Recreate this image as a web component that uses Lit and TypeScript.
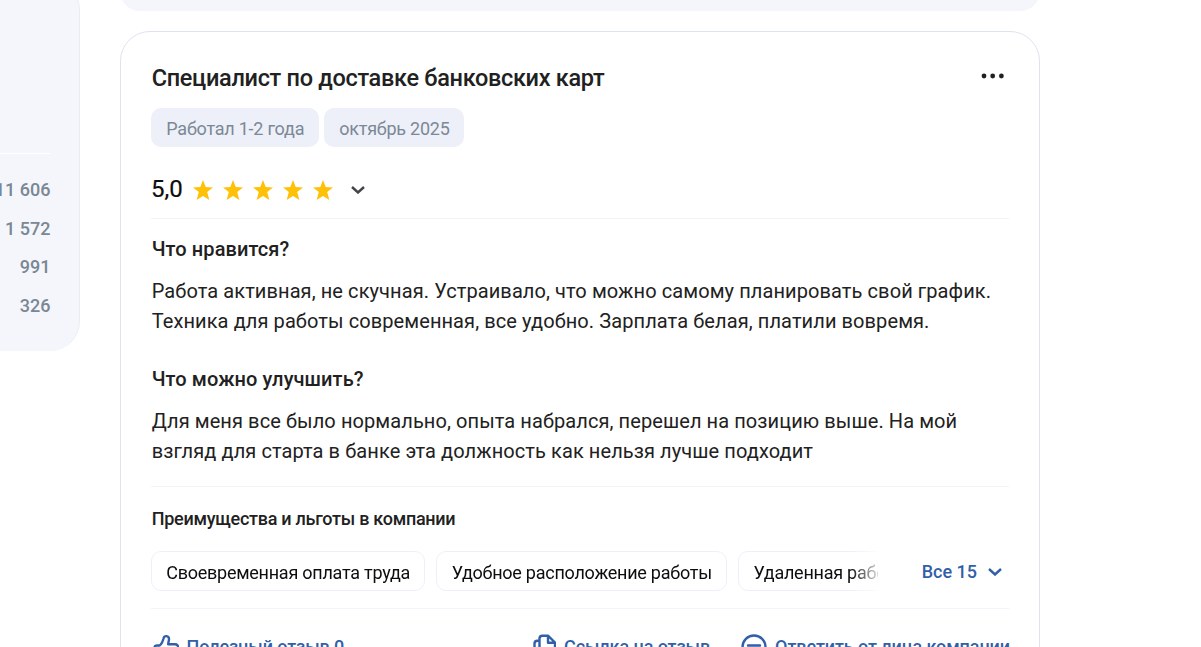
import { html, css, svg, LitElement } from "lit";
import { customElement, property } from "lit/decorators.js";

@customElement("review-rating")
export class ReviewRating extends LitElement {
  @property({ type: Number }) value = 5;

  static styles = css`
  :host {
    display: flex;
    align-items: center;
    height: 40px;
    color: #0d0d0d;
    font-size: 24px;
  }
  .value {
    width: 42px;
    margin-top: -2px;
    -webkit-text-stroke: 0.2px #0d0d0d;
  }
  .stars {
    display: flex;
    gap: 10px;
  }
  .stars svg {
    width: 20px;
    height: 20px;
    fill: #ffc107;
  }
  .chevron {
    margin-left: 18px;
    width: 14px;
    height: 8px;
    fill: none;
    stroke: #424448;
    stroke-width: 2.4;
  }
`;

  render() {
    return html`
      <span class="value">${this.value.toFixed(1).replace(".", ",")}</span>
      <span class="stars">
        ${Array.from({ length: this.value }, () => html`
          <svg viewBox="0 0 20 20"><path d="M10 0l2.700 7 7.300.4-5.800 4.700 2.200 7.900L10 15.900 3.600 20l2.200-7.900L0 7.400 7.300 7z"/></svg>`)}
      </span>
      <svg class="chevron" viewBox="0 0 14 8"><path d="M1 1l6 5.500L13 1"/></svg>
    `;
  }
}

@customElement("app-root")
export class AppRoot extends LitElement {
  @property({ attribute: false }) counts = ["11 606", "1 572", "991", "326"];
  @property({ attribute: false }) tags = ["Работал 1-2 года", "октябрь 2025"];
  @property({ attribute: false }) benefits = [
    "Своевременная оплата труда",
    "Удобное расположение работы",
    "Удаленная работа",
  ];

  static styles = css`
  :host {
    display: flex;
    align-items: flex-start;
    gap: 40px;
    height: 647px;
    overflow: hidden;
    background: #fff;
    color: #212121;
    font-family: Roboto, "Liberation Sans", sans-serif;
    font-size: 20px;
    line-height: 30px;
  }
  * {
    box-sizing: border-box;
  }

  aside {
    flex: none;
    width: 80px;
    height: 371px;
    margin-top: -20px;
    padding: 173px 29px 0 0;
    background: #f4f6fb;
    border-right: 1px solid #eaecf3;
    border-radius: 0 30px 30px 0;
  }
  .counts {
    display: flex;
    flex-direction: column;
    align-items: flex-end;
    border-top: 1px solid #fff;
    padding-top: 17px;
    color: #7a8794;
    font-size: 18px;
    font-weight: 500;
    line-height: 38.700px;
    white-space: nowrap;
  }
  .counts span {
    margin-right: -0.500px;
  }

  main {
    flex: none;
    width: 920px;
  }
  .previous {
    height: 11px;
    margin-bottom: 20px;
    overflow: hidden;
    display: flex;
    align-items: flex-end;
  }
  .previous div {
    flex: none;
    width: 100%;
    height: 60px;
    border-radius: 20px;
    background: #f4f6fb;
  }
  .card {
    height: 700px;
    padding: 30px;
    border: 1px solid #dfe3ed;
    border-radius: 30px;
  }
  header {
    display: flex;
    justify-content: space-between;
  }
  h2, h3, h4, p {
    margin: 0;
    font-weight: 500;
  }
  h2 {
    padding: 1px 0 0 0.700px;
    font-size: 23.500px;
    letter-spacing: -0.310px;
  }
  .more {
    width: 24px;
    height: 6px;
    margin: 11px 4px 0 0;
    fill: #212121;
  }
  .tags {
    display: flex;
    gap: 5px;
    margin: 15px 0 23px;
  }
  .tag {
    height: 39px;
    padding: 0 14.700px 0 15.300px;
    border-radius: 10px;
    background: #edf0f8;
    color: #7c8896;
    font-size: 18px;
    letter-spacing: -0.230px;
    line-height: 41px;
  }
  .line {
    height: 1px;
    background: #f3f4f9;
  }
  review-rating {
    margin-bottom: 8px;
  }
  h3 {
    margin: 0 0 12px;
    padding-left: 0.700px;
    font-size: 20px;
    letter-spacing: 0.100px;
  }
  p {
    padding-left: 0.700px;
    font-weight: 400;
    letter-spacing: 0.090px;
    white-space: nowrap;
  }
  .liked {
    margin: 15px 0 28px;
  }
  .improve {
    margin-bottom: 20px;
  }
  h4 {
    margin: 17px 0;
    padding-left: 0.700px;
    font-size: 18px;
    letter-spacing: -0.270px;
  }
  .benefits {
    display: flex;
    justify-content: space-between;
    margin-bottom: 17px;
  }
  .list {
    display: flex;
    gap: 11.700px;
    width: 727px;
    overflow: hidden;
    -webkit-mask-image: linear-gradient(to right, #000 700px, transparent 732px);
    mask-image: linear-gradient(to right, #000 700px, transparent 732px);
  }
  .benefit {
    flex: none;
    height: 40px;
    padding: 0 13.700px 0 14.200px;
    border: 1px solid #edf0f8;
    border-radius: 10px;
    color: #0d0d0d;
    font-size: 18px;
    letter-spacing: -0.250px;
    line-height: 41px;
    white-space: nowrap;
  }
  .all {
    display: flex;
    align-items: center;
    gap: 11px;
    height: 42px;
    margin-bottom: -2px;
    padding-right: 7px;
    color: #315fa8;
    font-size: 18px;
    font-weight: 500;
  }
  svg {
    display: block;
    flex: none;
  }
  .all svg {
    width: 14px;
    height: 8px;
    fill: none;
    stroke: #315fa8;
    stroke-width: 2.4;
  }
  footer {
    display: flex;
    margin: 23px -1px 0 1.500px;
    color: #315fa8;
    font-size: 18px;
    font-weight: 500;
    letter-spacing: -0.080px;
    white-space: nowrap;
  }
  .action {
    display: flex;
    align-items: center;
    gap: 8px;
  }
  .action svg {
    width: 26px;
    height: 26px;
    fill: none;
    stroke: #315fa8;
    stroke-width: 2.4;
    stroke-linejoin: round;
    stroke-linecap: round;
  }
  .link {
    margin-left: auto;
    margin-right: 31px;
  }
`;

  // 26x26 outline icons of the footer
  icons = {
    like: svg`<path d="M6.500 11.500H4C2.500 11.500 1.500 12.500 1.500 14v7c0 1.500 1 2.500 2.500 2.500h2.500M6.500 11.500c2.500-1.500 3.200-4 4-7 .8-3.500 5.500-3 5.500.5 0 2-.8 3.500-.8 5.200H22c2.200 0 3.300 1.600 2.800 3.300l-2 8c-.4 1.400-1.300 2-2.800 2H6.500"/>`,
    copy: svg`<path d="M9.500 4.500c0-1.800 1-2.800 2.800-2.800h5.700l7 6.800v8.500c0 1.800-1 2.800-2.800 2.800h-9.900c-1.800 0-2.800-1-2.800-2.800zM18 2v6.800h6.500M9 6.700H7.500C5.500 6.700 4.500 7.700 4.500 9.500v12c0 1.800 1 2.800 2.800 2.800h9c1.800 0 2.700-1 2.700-2.800"/>`,
    reply: svg`<circle cx="13" cy="13" r="11.500"/><path d="M7 11.500h12M7 16h12"/>`,
  };

  render() {
    return html`
      <aside>
        <div class="counts">${this.counts.map((count) => html`<span>${count}</span>`)}</div>
      </aside>
      <main>
        <div class="previous"><div></div></div>
        <article class="card">
          <header>
            <h2>Специалист по доставке банковских карт</h2>
            <svg class="more" viewBox="0 0 24 6"><circle cx="3" cy="3" r="2.400"/><circle cx="11.700" cy="3" r="2.400"/><circle cx="20.400" cy="3" r="2.400"/></svg>
          </header>
          <div class="tags">${this.tags.map((tag) => html`<span class="tag">${tag}</span>`)}</div>
          <review-rating .value=${5}></review-rating>
          <div class="line"></div>
          <section class="liked">
            <h3>Что нравится?</h3>
            <p>Работа активная, не скучная. Устраивало, что можно самому планировать свой график.<br>Техника для работы современная, все удобно. Зарплата белая, платили вовремя.</p>
          </section>
          <section class="improve">
            <h3>Что можно улучшить?</h3>
            <p>Для меня все было нормально, опыта набрался, перешел на позицию выше. На мой<br>взгляд для старта в банке эта должность как нельзя лучше подходит</p>
          </section>
          <div class="line"></div>
          <h4>Преимущества и льготы в компании</h4>
          <div class="benefits">
            <div class="list">${this.benefits.map((name) => html`<span class="benefit">${name}</span>`)}</div>
            <div class="all">Все 15 <svg viewBox="0 0 14 8"><path d="M1 1l6 5.500L13 1"/></svg></div>
          </div>
          <div class="line"></div>
          <footer>
            <div class="action"><svg viewBox="0 0 26 26">${this.icons.like}</svg>Полезный отзыв 0</div>
            <div class="action link"><svg viewBox="0 0 26 26">${this.icons.copy}</svg>Ссылка на отзыв</div>
            <div class="action"><svg viewBox="0 0 26 26">${this.icons.reply}</svg>Ответить от лица компании</div>
          </footer>
        </article>
      </main>
    `;
  }
}
